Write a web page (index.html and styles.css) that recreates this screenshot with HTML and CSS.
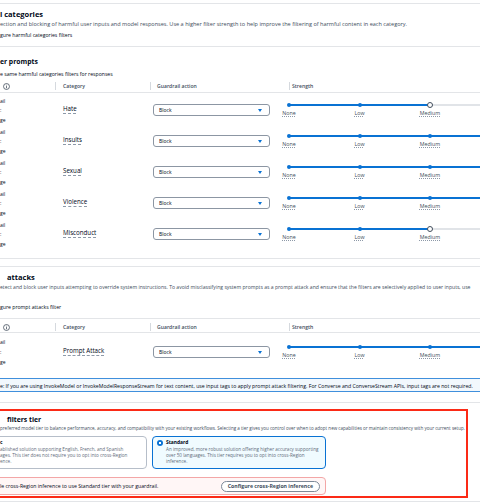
FILE: index.html
```html
<!DOCTYPE html>
<html lang="en">
<head>
<meta charset="utf-8">
<title>Guardrail filters</title>
<link rel="stylesheet" href="styles.css">
</head>
<body>
<div class="page">
  <section class="panel panel-harmful">
    <h2 class="heading">l categories</h2>
    <p class="desc">ection and blocking of harmful user inputs and model responses. Use a higher filter strength to help improve the filtering of harmful content in each category.</p>
    <div class="toggle-label">gure harmful categories filters</div>
    <div class="divider"></div>
    <h3 class="subheading">er prompts</h3>
    <div class="toggle-label">e same harmful categories filters for responses</div>
    <div class="table table-harmful">
      <div class="thead">
        <div class="th th-first"><svg class="info" width="7" height="7" viewBox="0 0 16 16"><circle cx="8" cy="8" r="6.8" fill="none" stroke="#414d5c" stroke-width="1.8"/><path d="M8 7v5M8 4v1.6" stroke="#414d5c" stroke-width="1.8"/></svg></div>
        <div class="th th-cat">Category</div>
        <div class="th th-action">Guardrail action</div>
        <div class="th th-strength">Strength</div>
      </div>
      <div class="row">
        <div class="frag"><span>ail</span><span>:</span><span>ge</span></div>
        <div class="cat-cell"><span class="cat">Hate</span></div>
        <div class="action-cell"><div class="select"><span>Block</span><svg width="4" height="3" viewBox="0 0 4 3"><path d="M0 0h4L2 3z" fill="#0972d3"/></svg></div></div>
        <div class="strength-cell">
          <div class="ticks medium"><i></i><i></i><b class="thumb"></b><i class="off"></i></div>
          <div class="labels"><span>None</span><span>Low</span><span>Medium</span></div>
        </div>
      </div>
      <div class="row">
        <div class="frag"><span>ail</span><span>:</span><span>ge</span></div>
        <div class="cat-cell"><span class="cat">Insults</span></div>
        <div class="action-cell"><div class="select"><span>Block</span><svg width="4" height="3" viewBox="0 0 4 3"><path d="M0 0h4L2 3z" fill="#0972d3"/></svg></div></div>
        <div class="strength-cell">
          <div class="ticks high"><i></i><i></i><i></i><b class="thumb"></b></div>
          <div class="labels"><span>None</span><span>Low</span><span>Medium</span></div>
        </div>
      </div>
      <div class="row">
        <div class="frag"><span>ail</span><span>:</span><span>ge</span></div>
        <div class="cat-cell"><span class="cat">Sexual</span></div>
        <div class="action-cell"><div class="select"><span>Block</span><svg width="4" height="3" viewBox="0 0 4 3"><path d="M0 0h4L2 3z" fill="#0972d3"/></svg></div></div>
        <div class="strength-cell">
          <div class="ticks high"><i></i><i></i><i></i><b class="thumb"></b></div>
          <div class="labels"><span>None</span><span>Low</span><span>Medium</span></div>
        </div>
      </div>
      <div class="row">
        <div class="frag"><span>ail</span><span>:</span><span>ge</span></div>
        <div class="cat-cell"><span class="cat">Violence</span></div>
        <div class="action-cell"><div class="select"><span>Block</span><svg width="4" height="3" viewBox="0 0 4 3"><path d="M0 0h4L2 3z" fill="#0972d3"/></svg></div></div>
        <div class="strength-cell">
          <div class="ticks high"><i></i><i></i><i></i><b class="thumb"></b></div>
          <div class="labels"><span>None</span><span>Low</span><span>Medium</span></div>
        </div>
      </div>
      <div class="row">
        <div class="frag"><span>ail</span><span>:</span><span>ge</span></div>
        <div class="cat-cell"><span class="cat">Misconduct</span></div>
        <div class="action-cell"><div class="select"><span>Block</span><svg width="4" height="3" viewBox="0 0 4 3"><path d="M0 0h4L2 3z" fill="#0972d3"/></svg></div></div>
        <div class="strength-cell">
          <div class="ticks medium"><i></i><i></i><b class="thumb"></b><i class="off"></i></div>
          <div class="labels"><span>None</span><span>Low</span><span>Medium</span></div>
        </div>
      </div>
    </div>
  </section>

  <section class="panel panel-attacks">
    <h2 class="heading heading-indent">attacks</h2>
    <p class="desc desc-attacks">etect and block user inputs attempting to override system instructions. To avoid misclassifying system prompts as a prompt attack and ensure that the filters are selectively applied to user inputs, use</p>
    <div class="toggle-label toggle-far">gure prompt attacks filter</div>
    <div class="table table-attacks">
      <div class="thead">
        <div class="th th-first"><svg class="info" width="7" height="7" viewBox="0 0 16 16"><circle cx="8" cy="8" r="6.8" fill="none" stroke="#414d5c" stroke-width="1.8"/><path d="M8 7v5M8 4v1.6" stroke="#414d5c" stroke-width="1.8"/></svg></div>
        <div class="th th-cat">Category</div>
        <div class="th th-action">Guardrail action</div>
        <div class="th th-strength">Strength</div>
      </div>
      <div class="row row-tall">
        <div class="frag"><span>ail</span><span>:</span><span>ge</span></div>
        <div class="cat-cell"><span class="cat">Prompt Attack</span></div>
        <div class="action-cell"><div class="select"><span>Block</span><svg width="4" height="3" viewBox="0 0 4 3"><path d="M0 0h4L2 3z" fill="#0972d3"/></svg></div></div>
        <div class="strength-cell">
          <div class="ticks high"><i></i><i></i><i></i><b class="thumb"></b></div>
          <div class="labels"><span>None</span><span>Low</span><span>Medium</span></div>
        </div>
      </div>
    </div>
    <div class="alert-info">e: If you are using InvokeModel or InvokeModelResponseStream for text content, use input tags to apply prompt attack filtering. For Converse and ConverseStream APIs, input tags are not required.</div>
  </section>

  <section class="panel panel-tier">
    <div class="highlight">
      <h2 class="tier-heading">filters tier</h2>
      <p class="desc tier-desc">preferred model tier to balance performance, accuracy, and compatibility with your existing workflows. Selecting a tier gives you control over when to adopt new capabilities or maintain consistency with your current setup.</p>
      <div class="tiles">
        <div class="tile tile-classic">
          <span class="radio radio-off"></span>
          <div class="tile-title">c</div>
          <div class="tile-desc">ablished solution supporting English, French, and Spanish<br>ages. This tier does not require you to opt into cross-Region<br>ence.</div>
        </div>
        <div class="tile tile-selected">
          <span class="radio"></span>
          <div class="tile-title">Standard</div>
          <div class="tile-desc">An improved, more robust solution offering higher accuracy supporting<br>over 50 languages. This tier requires you to opt into cross-Region<br>inference.</div>
        </div>
      </div>
      <div class="alert-error">
        <span>le cross-Region inference to use Standard tier with your guardrail.</span>
        <button class="btn" type="button">Configure cross-Region inference</button>
      </div>
    </div>
  </section>
</div>
</body>
</html>
```

FILE: styles.css
```css
* { box-sizing: border-box; margin: 0; padding: 0; }
html, body { width: 480px; height: 504px; overflow: hidden; background: #ffffff; }
body {
  font-family: "Open Sans", "Noto Sans", sans-serif;
  color: #000716;
  white-space: nowrap;
}
.page { width: 640px; margin-left: -30px; padding-top: 3px; }

.panel { border-top: 1px solid #e3e5e8; padding-left: 30px; }
.panel-harmful { padding-top: 5px; padding-bottom: 10px; border-bottom: 1px solid #e3e5e8; }
.panel-attacks { margin-top: 7px; padding-top: 5px; padding-bottom: 10px; }
.panel-tier { padding-top: 6px; padding-bottom: 3px; border-bottom: 1px solid #e3e5e8; }

.heading { font-size: 7.5px; font-weight: 700; line-height: 10px; }
.heading-indent { padding-left: 7px; }
.desc { font-size: 5.55px; line-height: 8px; margin-top: 1px; color: #414d5c; }
.desc.desc-attacks { font-size: 5.1px; }
.toggle-label { font-size: 5.15px; line-height: 8px; margin-top: 3px; }
.toggle-far { margin-top: 12px; }
.divider { height: 1px; background: #e3e5e8; margin: 7px 0 0 -30px; }
.subheading { font-size: 6.8px; font-weight: 700; line-height: 10px; margin-top: 10px; }

/* table */
.table { margin-left: -30px; }
.table-harmful { margin-top: 2px; }
.table-attacks { margin-top: 7px; }
.thead, .row {
  display: grid;
  grid-template-columns: 55px 95px 139px 1fr;
  padding-left: 30px;
}
.thead {
  border-top: 1px solid transparent;
  border-bottom: 1px solid #e3e5e8;
  padding-top: 1px;
  padding-bottom: 2px;
}
.table-attacks .thead { border-top-color: #e3e5e8; padding-top: 4px; padding-bottom: 1px; }
.th {
  display: flex;
  align-items: center;
  height: 8px;
  font-size: 5.1px;
  font-weight: 600;
  color: #414d5c;
}
.th-cat, .th-action, .th-strength { border-left: 1px solid #d5d9de; }
.th-first { padding-left: 3px; }
.th-cat { padding-left: 7px; }
.th-action { padding-left: 6px; }
.th-strength { padding-left: 2px; }

.row { height: 31px; }
.row-tall { height: 37px; }
.frag {
  display: flex;
  flex-direction: column;
  font-size: 5px;
  line-height: 9.5px;
  padding-top: 3.5px;
}
.row-tall .frag { line-height: 10px; padding-top: 4px; }
.cat-cell { padding: 8px 0 0 8px; line-height: 8px; }
.row-tall .cat-cell { padding-top: 10px; }
.cat {
  font-size: 6.2px;
  text-decoration: underline dashed #8d99a8;
  text-underline-offset: 1.5px;
  text-decoration-thickness: 0.6px;
}
.action-cell { padding: 11px 0 0 3px; }
.row-tall .action-cell { padding-top: 13px; }
.select {
  width: 117px;
  height: 12px;
  border: 1px solid #8c96a3;
  border-radius: 3px;
  display: flex;
  align-items: center;
  justify-content: space-between;
  padding: 0 7px 0 5px;
  font-size: 5px;
}

.strength-cell { padding-top: 9px; }
.row-tall .strength-cell { padding-top: 11px; }
.ticks, .labels {
  display: grid;
  grid-template-columns: repeat(4, 70.5px);
  margin-left: -35.25px;
  justify-items: center;
}
.ticks { height: 6px; align-items: center; }
.ticks.high {
  background: linear-gradient(#0972d3, #0972d3) no-repeat 35.25px 50% / 211.5px 2px;
}
.ticks.medium {
  background:
    linear-gradient(#0972d3, #0972d3) no-repeat 35.25px 50% / 141px 2px,
    linear-gradient(#e1e4e8, #e1e4e8) no-repeat 176.25px 50% / 70.5px 2px;
}
.ticks i { width: 4px; height: 4px; border-radius: 50%; background: #0972d3; }
.ticks i.off { background: #e1e4e8; }
.ticks .thumb {
  width: 6px;
  height: 6px;
  border-radius: 50%;
  background: #ffffff;
  border: 1px solid #414d5c;
}
.labels {
  margin-top: 2px;
  font-size: 5.3px;
  line-height: 6px;
  color: #414d5c;
}
.labels span {
  text-decoration: underline dotted #8d99a8;
  text-underline-offset: 1px;
}

.alert-info {
  margin: 8px 0 0 -30px;
  border: 1px solid #3f8fdc;
  background: #f2f8fd;
  padding: 3px 0 1px 29px;
  font-size: 5.18px;
  line-height: 8px;
}

/* tier */
.highlight {
  margin-left: -30px;
  width: 498px;
  border: 2px solid #fb2a16;
  padding: 5px 0 1px 28px;
}
.tier-heading {
  font-size: 6.8px;
  font-weight: 700;
  line-height: 8px;
  padding-left: 7px;
}
.desc.tier-desc { margin-top: 0; font-size: 4.52px; }
.tiles {
  margin: 4px 0 0 -27px;
  width: 353px;
  display: grid;
  grid-template-columns: 174px 174px;
  column-gap: 5px;
}
.tile {
  height: 33px;
  border: 1px solid #b6bec9;
  border-radius: 4px;
  padding: 2px 0 0 4px;
  display: grid;
  grid-template-columns: 6px 1fr;
  column-gap: 3px;
  grid-template-rows: 7px auto;
}
.tile-classic { padding-left: 17px; }
.tile-selected { border-color: #0972d3; background: #f0fbff; }
.radio {
  width: 6px;
  height: 6px;
  align-self: center;
  border-radius: 50%;
  background: radial-gradient(circle, #ffffff 0 1.1px, #0972d3 1.4px);
}
.radio-off { background: #ffffff; border: 1px solid #8c96a3; }
.tile-title { font-size: 4.9px; font-weight: 700; line-height: 7px; }
.tile-desc {
  grid-column: 2;
  font-size: 4.6px;
  line-height: 6px;
  color: #5f6b7a;
}

.alert-error {
  margin: 8px 0 0 -27px;
  width: 353px;
  height: 18px;
  border: 1px solid #f3a6a6;
  border-radius: 4px;
  background: #fff6f6;
  display: flex;
  align-items: center;
  justify-content: space-between;
  padding: 0 5px 0 26px;
  font-size: 5.2px;
}
.btn {
  font-family: inherit;
  font-size: 5.2px;
  font-weight: 700;
  color: #414d5c;
  background: #ffffff;
  border: 1px solid #7d8998;
  border-radius: 6px;
  height: 11px;
  padding: 0 6px;
}
```
